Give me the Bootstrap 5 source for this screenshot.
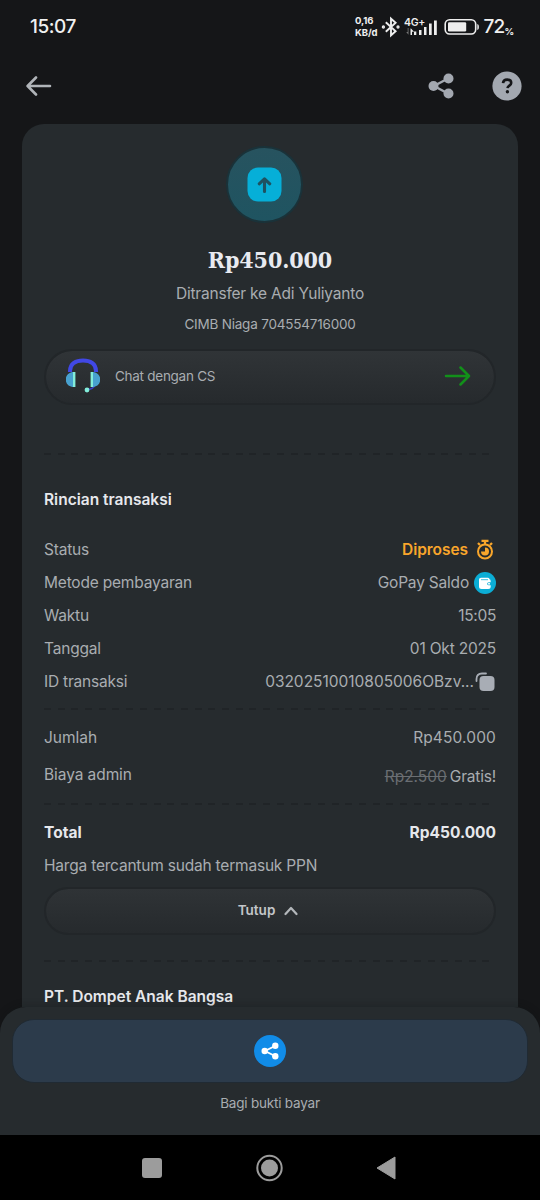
<!DOCTYPE html>
<html lang="id">
<head>
<meta charset="utf-8">
<meta name="viewport" content="width=device-width, initial-scale=1">
<title>Rincian transaksi</title>
<link href="https://cdn.jsdelivr.net/npm/bootstrap@5.3.0/dist/css/bootstrap.min.css" rel="stylesheet">
<style>
body{font-family:Inter,"Liberation Sans",sans-serif;background:#151618;color:#a9adb1;font-size:15.5px;line-height:20px;letter-spacing:-.2px}
svg{display:block;flex:none}
.screen{width:540px;height:1200px}
.statusbar{height:54px;padding:0 26px 0 30px;color:#f0f0f0}
.clock{font-size:19px;font-weight:500;letter-spacing:-.45px}
.tiny{font-size:9.5px;font-weight:700;line-height:11.6px;letter-spacing:-.1px}
.appbar{height:63px;padding:0 18px 0 26px}
.body-area{padding:7px 22px 0;height:890px}
.receipt{height:883px;background:#262b2e;border-radius:22px 22px 0 0;padding:22px 22px 0}
.hero{width:77px;height:77px;border-radius:50%;background:linear-gradient(#27535f,#1f5461);border:2px solid #1a3239;margin-right:12px}
.amount{font:700 23px/30px "DejaVu Serif Condensed","DejaVu Serif",serif;color:#e8eaf0;letter-spacing:-.1px;margin-top:22px}
.fs-s{font-size:13.5px}
.pill{border:2px solid #222629;border-radius:28px;background:linear-gradient(#303437,#262a2d) padding-box}
.chat{height:56px;margin-top:15px;padding:0 23px 0 20px}
.toggle{height:48px;margin-top:11px;padding-bottom:3px;color:#c3c6ca;font-weight:600;letter-spacing:0;background:linear-gradient(#2f3336,#262a2d) padding-box}
.dash{height:2px;background:repeating-linear-gradient(90deg,#202427 0 7px,transparent 7px 13.7px)}
.bold{font-weight:600;letter-spacing:0;color:#e6e8ec}
.line{height:33px}
.num{letter-spacing:.13px}
.old{color:#6a6e72;text-decoration:line-through}
.warn{color:#f9a62b;font-weight:600;letter-spacing:-.05px}
.sheet{height:128px;background:#262b2e;border-radius:26px 26px 0 0;padding:12px 12px 0;box-shadow:0 -2px 7px rgba(15,17,19,.22);position:relative}
.share-btn{height:64px;border-radius:22px;background:#2c3b4b;border:1px solid #202a33}
.share-dot{width:32px;height:32px;border-radius:50%;background:#118ce8}
.navkeys{height:65px;background:#000}
</style>
</head>
<body>
<main class="screen d-flex flex-column overflow-hidden">
  <header class="statusbar d-flex align-items-center justify-content-between">
    <span class="clock">15:07</span>
    <div class="d-flex align-items-center">
      <div class="tiny">0,16<br>KB/d</div>
      <svg class="ms-1" width="20" height="22" viewBox="0 0 20 22" fill="none" stroke="#eee" stroke-width="1.9"><path d="M4.800 6.200 14.600 15.200 10 19.300V2.700L14.600 6.800 4.800 15.800"/><circle cx="2.400" cy="11" r=".7"/><circle cx="17" cy="11" r=".7"/></svg>
      <svg style="margin-left:3px" width="35" height="22" viewBox="0 0 35 22" fill="#eee"><text x="0" y="9.800" font-size="10.500" font-weight="600" letter-spacing="-.3">4G+</text><path d="M10 15.500h2.300V19H10zM15 14h2.500v5H15zM20 11h2.500v8H20zM25 7.500h2.700V19H25zM30 4.500h2.800V19H30zM7 12.500l3 3.200H8V19H6.500v-6.500z"/><path d="M4.500 12v6.700L2.200 16h1.500v-4z" fill="#777"/></svg>
      <svg style="margin-left:5px" width="36" height="18" viewBox="0 0 36 18"><rect x="1.200" y="1.700" width="30.500" height="14.300" rx="4.400" fill="none" stroke="#eee" stroke-width="1.600"/><rect x="4" y="4.300" width="18.200" height="9.200" rx="1.200" fill="#eee"/><path d="M33.300 6v6c1.300-.5 1.600-1.400 1.600-3s-.3-2.500-1.600-3z" fill="#eee"/></svg>
      <span class="clock" style="margin-left:3px;letter-spacing:-.8px">72</span><span class="tiny align-self-end" style="line-height:14px">%</span>
    </div>
  </header>

  <nav class="appbar d-flex align-items-center">
    <svg class="me-auto" width="26" height="22" viewBox="0 0 26 22" fill="none" stroke="#b0b4b8" stroke-width="2.600" stroke-linecap="round" stroke-linejoin="round"><path d="M24 11H2M10 2.500 1.600 11 10 19.500"/></svg>
    <svg width="28" height="28" viewBox="0 0 28 28" fill="#a3a8b0"><path d="M21 6.500 7 14l14 7.500" fill="none" stroke="#a3a8b0" stroke-width="2.400"/><circle cx="6.500" cy="14" r="5"/><circle cx="21.500" cy="6.500" r="5"/><circle cx="21.500" cy="21.500" r="5"/></svg>
    <svg style="margin-left:37px" width="30" height="30" viewBox="0 0 30 30"><circle cx="15" cy="15" r="14.600" fill="#a3a8b0"/><path d="M11 12.200c.2-2.400 1.900-3.600 4.200-3.600 2.400 0 4 1.300 4 3.300 0 2.700-3.500 2.600-3.700 5.200" fill="none" stroke="#151618" stroke-width="2.600"/><circle cx="15.400" cy="20.700" r="1.700" fill="#151618"/></svg>
  </nav>

  <div class="body-area">
    <section class="receipt">
      <div class="text-center d-flex flex-column align-items-center">
        <div class="hero d-flex align-items-center justify-content-center">
          <svg width="35" height="35" viewBox="0 0 35 35"><rect x=".5" y=".5" width="34" height="34" rx="10.500" fill="#06afd8"/><path d="M17.500 24.500V12.500M12.200 16.800l5.300-5 5.300 5" fill="none" stroke="#1e5261" stroke-width="3.100" stroke-linecap="round" stroke-linejoin="round"/></svg>
        </div>
        <div class="amount">Rp450.000</div>
        <div style="margin-top:9px">Ditransfer ke Adi Yuliyanto</div>
        <div class="fs-s" style="margin-top:10px">CIMB Niaga 704554716000</div>
      </div>
      <div class="pill chat d-flex align-items-center">
        <svg class="mb-1" width="34" height="36" viewBox="0 0 34 36"><path d="M4 15v-1C4 6.500 10 3.500 17 3.500S30 6.500 30 14v1" fill="none" stroke="#4148e5" stroke-width="4"/><path d="M29 28c-1.500 3.500-4 4.500-8 4.500" fill="none" stroke="#393fc4" stroke-width="1.800"/><path d="M8 15c-11 0-11 15 0 15zM26 15c11 0 11 15 0 15z" fill="#48a1cf"/><path d="M7 15h2.400v15H7zM24.600 15H27v15h-2.400z" fill="#82edda"/><circle cx="21" cy="33" r="2.400" fill="#82edda"/></svg>
        <span class="fs-s me-auto" style="letter-spacing:-.27px;margin:0 0 3px 15px">Chat dengan CS</span>
        <svg class="mb-1" width="27" height="22" viewBox="0 0 27 22" fill="none" stroke="#12901a" stroke-width="2.500" stroke-linecap="round" stroke-linejoin="round"><path d="M2 12h23M16.500 3.500 25 12l-8.500 8.500"/></svg>
      </div>
      <div class="dash" style="margin-top:48px"></div>
      <div class="bold" style="margin:35px 0 23px">Rincian transaksi</div>
      <div class="line d-flex justify-content-between align-items-center"><span>Status</span><span class="warn d-flex align-items-center">Diproses
        <svg class="ms-2" width="20" height="22" viewBox="0 0 20 22" fill="none" stroke="#f9a62b" stroke-width="2"><circle cx="9" cy="12.500" r="7"/><path d="M5.500 1.800h7M9 2v3.500M2 4l2 2M16 4l-2 2" stroke-width="2.300"/><path d="M9 8.500v4H5a4 4 0 1 0 4-4z" fill="#f9a62b" stroke="none"/></svg></span></div>
      <div class="line d-flex justify-content-between align-items-center"><span>Metode pembayaran</span><span class="d-flex align-items-center">GoPay Saldo
        <svg style="margin-left:5px" width="22" height="22" viewBox="0 0 22 22"><circle cx="11" cy="11" r="11" fill="#0badd5"/><path d="M5 7.800Q5 5.800 7 5.800h7q1.500 0 1.500 1.500 1.200.2 1.200 2v1h-2a1.500 1.500 0 0 0 0 3h2v1.200q0 2.500-2.500 2.500H7.500Q5 17 5 14.500z" fill="#fff"/><path d="M7 7.700h7" stroke="#0badd5" stroke-width=".8"/><circle cx="15" cy="11.800" r="1" fill="#fff"/></svg></span></div>
      <div class="line d-flex justify-content-between align-items-center"><span>Waktu</span><span style="letter-spacing:-.35px">15:05</span></div>
      <div class="line d-flex justify-content-between align-items-center"><span>Tanggal</span><span>01 Okt 2025</span></div>
      <div class="line d-flex justify-content-between align-items-center"><span>ID transaksi</span><span class="d-flex align-items-center" style="letter-spacing:-.02px">03202510010805006OBzv...
        <svg style="margin:0 1px" width="20" height="20" viewBox="0 0 20 20"><path d="M1.500 9V7Q1.500 1.500 7 1.500h4" fill="none" stroke="#a8adb5" stroke-width="1.800" stroke-linecap="round"/><rect x="4.500" y="4" width="15" height="15" rx="4" fill="#a8adb5"/></svg></span></div>
      <div class="dash" style="margin-top:10px"></div>
      <div class="d-flex justify-content-between" style="margin-top:18px"><span style="letter-spacing:0">Jumlah</span><span class="num">Rp450.000</span></div>
      <div class="d-flex justify-content-between" style="margin-top:17px"><span style="letter-spacing:-.08px">Biaya admin</span><span style="margin-top:2px"><span class="old" style="letter-spacing:0">Rp2.500</span><span style="margin-left:3px">Gratis!</span></span></div>
      <div class="dash" style="margin-top:16px"></div>
      <div class="bold d-flex justify-content-between" style="margin-top:18px;font-weight:700"><span>Total</span><span>Rp450.000</span></div>
      <div style="margin-top:13px">Harga tercantum sudah termasuk PPN</div>
      <div class="pill toggle fs-s d-flex align-items-center justify-content-center">Tutup
        <svg style="margin:2px 4px 0 9px" width="14" height="10" viewBox="0 0 14 10" fill="none" stroke="#b3b7bb" stroke-width="2.200" stroke-linecap="round" stroke-linejoin="round"><path d="M1.500 8 7 2l5.500 6"/></svg></div>
      <div class="dash" style="margin-top:25px"></div>
      <div class="bold" style="margin-top:25px">PT. Dompet Anak Bangsa</div>
    </section>
  </div>

  <section class="sheet text-center">
    <div class="share-btn d-flex align-items-center justify-content-center">
      <div class="share-dot d-flex align-items-center justify-content-center">
        <svg width="20" height="20" viewBox="0 0 20 20" fill="#fff"><path d="M15 5 5 10l10 5" fill="none" stroke="#fff" stroke-width="1.900"/><circle cx="4.700" cy="10" r="3.200"/><circle cx="15.300" cy="4.800" r="3.200"/><circle cx="15.300" cy="15.200" r="3.200"/></svg>
      </div>
    </div>
    <div class="fs-s" style="margin-top:10px">Bagi bukti bayar</div>
  </section>

  <footer class="navkeys d-flex justify-content-center align-items-center">
    <svg width="260" height="30" viewBox="0 0 260 30" fill="#9c9c9c"><rect x="2" y="5" width="20" height="20" rx="3"/><circle cx="129.500" cy="15" r="12.200" fill="none" stroke="#9c9c9c" stroke-width="2"/><circle cx="129.500" cy="15" r="8.500"/><path d="M237 15 255 4v22z" stroke="#9c9c9c" stroke-width="1" stroke-linejoin="round"/></svg>
  </footer>
</main>
<script src="https://cdn.jsdelivr.net/npm/bootstrap@5.3.0/dist/js/bootstrap.bundle.min.js"></script>
</body>
</html>
